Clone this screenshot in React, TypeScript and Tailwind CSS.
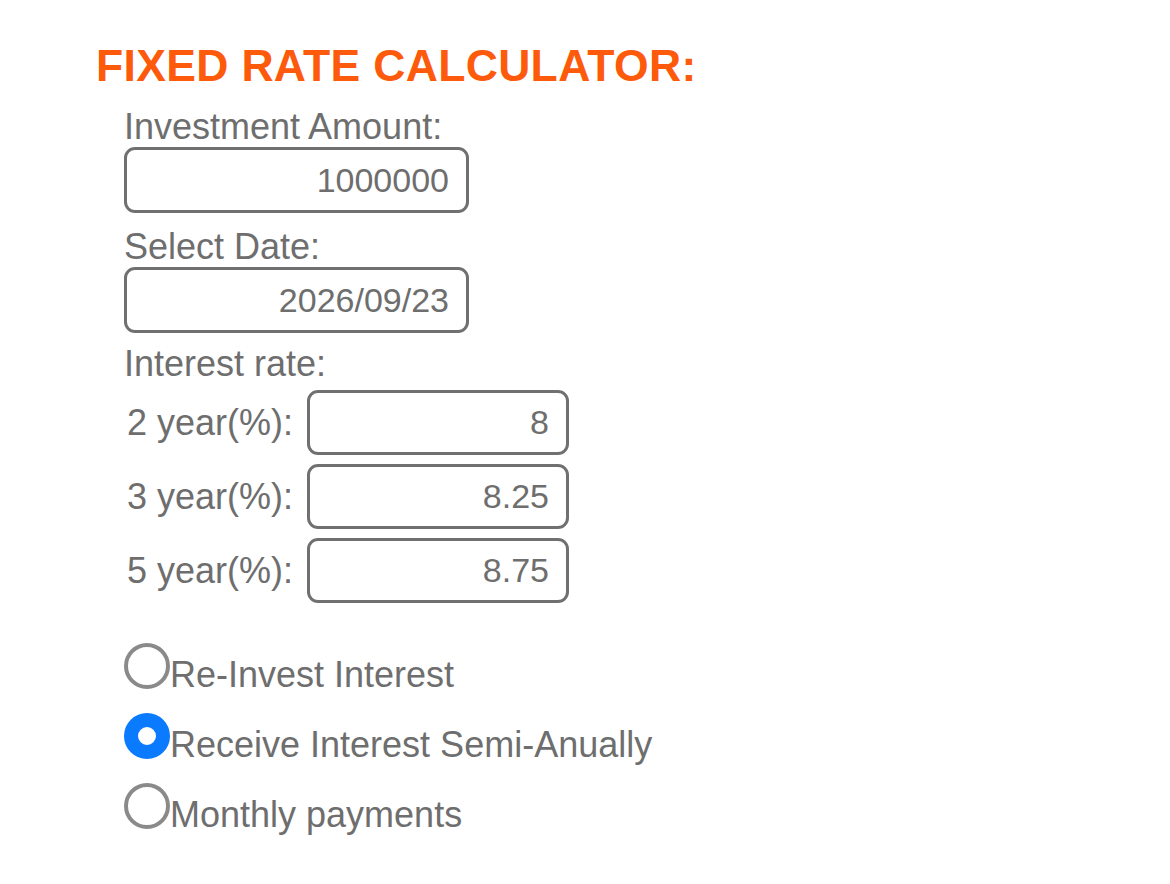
import React, { useState } from "react";

const rates = [
  { label: "2 year(%):", value: "8" },
  { label: "3 year(%):", value: "8.25" },
  { label: "5 year(%):", value: "8.75" },
];

const options = ["Re-Invest Interest", "Receive Interest Semi-Anually", "Monthly payments"];

export default function App() {
  const [payout, setPayout] = useState(1);

  return (
    <div className="min-h-screen bg-white pl-[96px] pt-[41px] font-['Liberation_Sans',Arial,sans-serif] text-[#6e6e6e]">
      <h1 className="text-[44.5px] font-bold leading-[50px] tracking-[0.33px] text-[#fd5a0c]">FIXED RATE CALCULATOR:</h1>

      <div className="mt-[16px] pl-[28px]">
        <Field label="Investment Amount:" value="1000000" />
        <div className="mt-[14px]">
          <Field label="Select Date:" value="2026/09/23" />
        </div>

        <div className="mt-[11px] text-[36px] leading-[40px]">Interest rate:</div>
        <div className="mt-[6px] flex flex-col gap-[9px]">
          {rates.map((r) => (
            <div key={r.label} className="flex items-center">
              <span className="w-[183px] pl-[3px] text-[36px] leading-[40px]">{r.label}</span>
              <input
                readOnly
                value={r.value}
                className="h-[65px] w-[262px] rounded-[11px] border-[3px] border-[#707070] bg-white pr-[17px] text-right text-[34px] text-[#6e6e6e] outline-none"
              />
            </div>
          ))}
        </div>

        {/* payout options */}
        <div className="mt-[40px] flex flex-col">
          {options.map((opt, i) => (
            <label key={opt} className="flex h-[70px] cursor-pointer items-start">
              <input
                type="radio"
                name="payout"
                checked={payout === i}
                onChange={() => setPayout(i)}
                className="h-[46px] w-[46px] shrink-0 appearance-none rounded-full border-4 border-[#8a8a8a] bg-white checked:border-[14px] checked:border-[#0a7aff]"
              />
              <span className="mt-[12px] text-[36px] leading-[40px]">{opt}</span>
            </label>
          ))}
        </div>
      </div>
    </div>
  );
}

function Field({ label, value }: { label: string; value: string }) {
  return (
    <div>
      <div className="text-[36px] leading-[40px]">{label}</div>
      <input
        readOnly
        value={value}
        className="h-[66px] w-[345px] rounded-[11px] border-[3px] border-[#707070] bg-white pr-[17px] text-right text-[34px] text-[#6e6e6e] outline-none"
      />
    </div>
  );
}
